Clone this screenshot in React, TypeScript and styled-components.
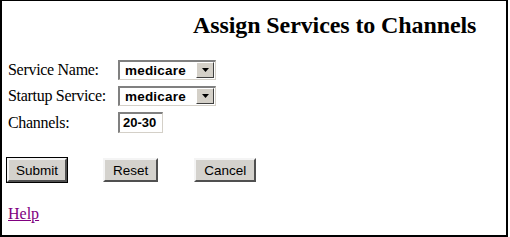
import React from "react";
import styled, { createGlobalStyle } from "styled-components";

const Global = createGlobalStyle`
  html, body { margin: 0; padding: 0; background: #fff; }
  body { font-family: "Liberation Serif", "Times New Roman", serif; }
`;

const Frame = styled.div`
  box-sizing: border-box;
  width: 508px;
  height: 237px;
  border-left: 2px solid #000;
  border-top: 1px solid #000;
  border-right: 2px solid #000;
  border-bottom: 2px solid #000;
  padding: 0 0 0 4px;
  display: flex;
  flex-direction: column;
`;

const Title = styled.h2`
  margin: 12px 0 0 187px;
  font-family: "Liberation Serif", "Times New Roman", serif;
  font-weight: bold;
  font-size: 24px;
  line-height: 24px;
  letter-spacing: -0.1px;
  color: #000;
`;

const FormTable = styled.div`
  margin-top: 23px;
  display: grid;
  grid-template-columns: 112px auto;
  row-gap: 6px;
  align-items: center;
  justify-items: start;
`;

const Label = styled.label`
  font-family: "Liberation Serif", "Times New Roman", serif;
  font-size: 16px;
  color: #000;
  padding-left: 2px;
  white-space: nowrap;
  letter-spacing: -0.3px;
`;

const SelectBox = styled.div`
  box-sizing: border-box;
  width: 98px;
  height: 20px;
  display: flex;
  align-items: stretch;
  background: #fff;
  border-top: 2px solid #808080;
  border-left: 2px solid #808080;
  border-right: 1px solid #d4d0c8;
  border-bottom: 1px solid #d4d0c8;
`;

const SelectText = styled.span`
  flex: 1;
  font-family: "Liberation Sans", Arial, sans-serif;
  font-weight: bold;
  font-size: 13.5px;
  line-height: 17px;
  padding-left: 5px;
  letter-spacing: 0.2px;
  color: #000;
`;

const ArrowBtn = styled.span`
  box-sizing: border-box;
  width: 18px;
  margin: 0 1px 1px 0;
  background: #d4d0c8;
  border-top: 1px solid #fff;
  border-left: 1px solid #fff;
  border-right: 1px solid #404040;
  border-bottom: 1px solid #404040;
  display: flex;
  align-items: center;
  justify-content: center;
`;

const TextBox = styled.div`
  box-sizing: border-box;
  width: 45px;
  height: 21px;
  background: #fff;
  border-top: 2px solid #808080;
  border-left: 2px solid #808080;
  border-right: 1px solid #d4d0c8;
  border-bottom: 1px solid #d4d0c8;
  font-family: "Liberation Sans", Arial, sans-serif;
  font-weight: bold;
  font-size: 13px;
  line-height: 18px;
  padding-left: 3px;
  color: #000;
`;

const ButtonRow = styled.div`
  margin-top: 25px;
  display: flex;
  gap: 36px;
  align-items: center;
`;

const Button = styled.button<{ $default?: boolean }>`
  box-sizing: border-box;
  height: 24px;
  padding: 0 ${(p) => (p.$default ? 7 : 8)}px;
  background: #d4d2cd;
  font-family: "Liberation Sans", Arial, sans-serif;
  font-size: 13.5px;
  color: #000;
  border-top: 2px solid #f4f4f4;
  border-left: 2px solid #f4f4f4;
  border-right: 2px solid #505050;
  border-bottom: 2px solid #505050;
  outline: ${(p) => (p.$default ? "1px solid #000" : "none")};
  outline-offset: 0;
  margin-left: ${(p) => (p.$default ? "1px" : "0")};
  cursor: pointer;
`;

const HelpLink = styled.a`
  margin-top: 23px;
  margin-left: 2px;
  align-self: flex-start;
  font-family: "Liberation Serif", "Times New Roman", serif;
  font-size: 16px;
  color: #800080;
  text-decoration: underline;
`;

function Select({ value }: { value: string }) {
  return (
    <SelectBox>
      <SelectText>{value}</SelectText>
      <ArrowBtn>
        <svg width="7" height="4" viewBox="0 0 7 4">
          <path d="M0 0h7L3.5 4z" fill="#000" />
        </svg>
      </ArrowBtn>
    </SelectBox>
  );
}

export default function App() {
  return (
    <>
      <Global />
      <Frame>
        <Title>Assign Services to Channels</Title>
        <FormTable>
          <Label>Service Name:</Label>
          <Select value="medicare" />
          <Label>Startup Service:</Label>
          <Select value="medicare" />
          <Label>Channels:</Label>
          <TextBox>20-30</TextBox>
        </FormTable>
        <ButtonRow>
          <Button $default>Submit</Button>
          <Button>Reset</Button>
          <Button>Cancel</Button>
        </ButtonRow>
        <HelpLink href="#">Help</HelpLink>
      </Frame>
    </>
  );
}
